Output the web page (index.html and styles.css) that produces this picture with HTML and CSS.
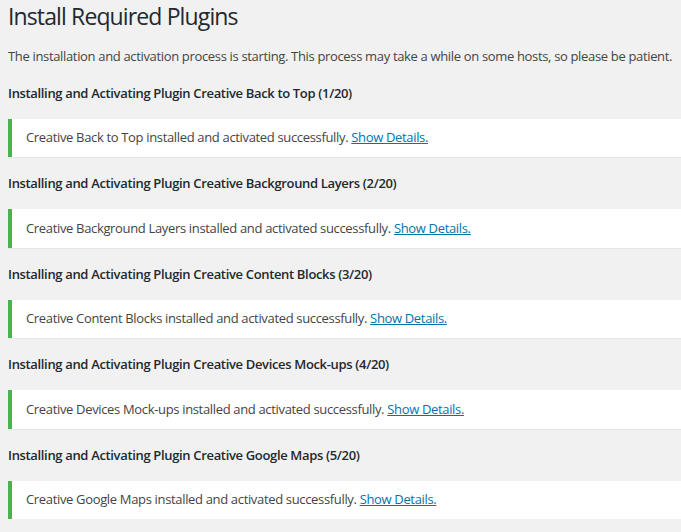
FILE: index.html
```html
<!DOCTYPE html>
<html lang="en">
<head>
<meta charset="utf-8">
<title>Install Required Plugins</title>
<link rel="stylesheet" href="styles.css">
</head>
<body>
<div class="wrap">
  <h1 class="title">Install Required Plugins</h1>
  <p class="intro">The installation and activation process is starting. This process may take a while on some hosts, so please be patient.</p>

  <h4 class="step">Installing and Activating Plugin Creative Back to Top (1/20)</h4>
  <div class="notice"><p>Creative Back to Top installed and activated successfully. <a href="#">Show Details.</a></p></div>

  <h4 class="step">Installing and Activating Plugin Creative Background Layers (2/20)</h4>
  <div class="notice"><p>Creative Background Layers installed and activated successfully. <a href="#">Show Details.</a></p></div>

  <h4 class="step">Installing and Activating Plugin Creative Content Blocks (3/20)</h4>
  <div class="notice"><p>Creative Content Blocks installed and activated successfully. <a href="#">Show Details.</a></p></div>

  <h4 class="step">Installing and Activating Plugin Creative Devices Mock-ups (4/20)</h4>
  <div class="notice"><p>Creative Devices Mock-ups installed and activated successfully. <a href="#">Show Details.</a></p></div>

  <h4 class="step">Installing and Activating Plugin Creative Google Maps (5/20)</h4>
  <div class="notice"><p>Creative Google Maps installed and activated successfully. <a href="#">Show Details.</a></p></div>
</div>
</body>
</html>
```
FILE: styles.css
```css
html, body {
  margin: 0;
  padding: 0;
  background: #f1f1f1;
}
body {
  font-family: "Open Sans", "Noto Sans", sans-serif;
  font-size: 13px;
  letter-spacing: -0.026em;
  color: #444;
}
.wrap {
  padding: 0 0 0 8px;
}
.title {
  margin: 0;
  padding: 0 0 15px;
  font-size: 23px;
  font-weight: 400;
  line-height: 32px;
  letter-spacing: -0.038em;
  color: #23282d;
}
.intro {
  margin: 0 0 16.5px;
  line-height: 19.5px;
  white-space: nowrap;
}
.step {
  margin: 17px 0;
  font-size: 13px;
  font-weight: 600;
  line-height: 18px;
  color: #23282d;
}
.notice {
  background: #fff;
  border-left: 4px solid #46b450;
  box-shadow: 0 1px 1px rgba(0, 0, 0, 0.04);
  padding: 1px 12px;
}
.notice p {
  margin: 6.5px 0;
  padding: 2px;
  line-height: 19.5px;
}
.notice a {
  color: #0073aa;
  text-decoration: underline;
}
```
